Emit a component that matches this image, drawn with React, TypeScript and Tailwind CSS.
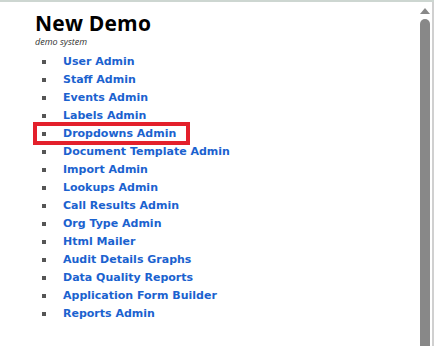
const LINKS = [
  "User Admin",
  "Staff Admin",
  "Events Admin",
  "Labels Admin",
  "Dropdowns Admin",
  "Document Template Admin",
  "Import Admin",
  "Lookups Admin",
  "Call Results Admin",
  "Org Type Admin",
  "Html Mailer",
  "Audit Details Graphs",
  "Data Quality Reports",
  "Application Form Builder",
  "Reports Admin",
];

const HIGHLIGHTED = "Dropdowns Admin";

export default function App() {
  return (
    <div className="w-[434px] h-[346px] overflow-hidden bg-white border-t-2 border-[#cdd6d1] flex">
      {/* Page content */}
      <div className="flex-1 pl-[35px] pt-[10px]">
        <h1 className="text-[21px] leading-[22px] font-bold text-black font-['Open_Sans',sans-serif] tracking-[0.2px]">
          New Demo
        </h1>
        <p className="text-[9px] leading-[11px] italic text-[#333] font-['Open_Sans',sans-serif] mt-[2px]">
          demo system
        </p>

        <ul className="mt-[6px] font-['DejaVu_Sans',Verdana,sans-serif]">
          {LINKS.map((label) => (
            <li key={label} className="relative flex items-center h-[18px]">
              <span className="w-[4px] h-[4px] bg-[#555] ml-[7px] mr-[17px] blur-[0.3px]" />
              <a
                href="#"
                className="text-[11px] font-bold text-[#1b62cf] no-underline"
              >
                {label}
              </a>
              {label === HIGHLIGHTED && (
                <span className="absolute left-[-2px] top-[-3px] w-[157px] h-[23px] border-[4px] border-[#e3202b]" />
              )}
            </li>
          ))}
        </ul>
      </div>

      {/* Scrollbar */}
      <div className="w-[15px] flex flex-col items-center pt-[6px]">
        <div className="w-0 h-0 border-l-[5px] border-r-[5px] border-b-[6px] border-l-transparent border-r-transparent border-b-[#888]" />
        <div className="mt-[5px] w-[10px] flex-1 bg-[#888] rounded-t-[5px]" />
      </div>
      <div className="w-[2px] bg-[#d0d0d0]" />
    </div>
  );
}
